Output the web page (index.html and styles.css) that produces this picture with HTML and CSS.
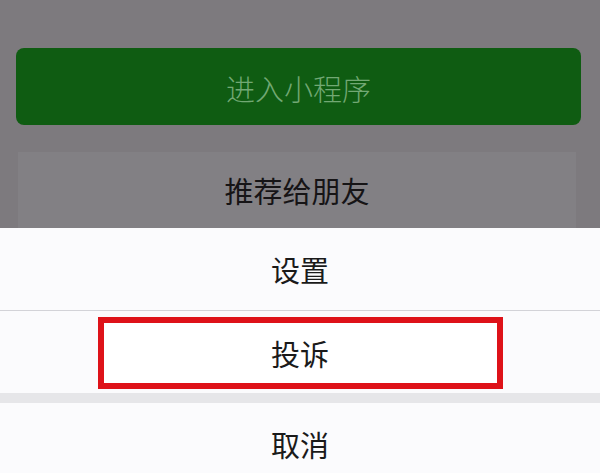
FILE: index.html
```html
<!DOCTYPE html>
<html lang="zh-CN">
<head>
  <meta charset="UTF-8">
  <meta name="viewport" content="width=device-width, initial-scale=1.0">
  <title>小程序菜单</title>
  <link rel="stylesheet" href="styles.css">
</head>
<body>
  <!-- Dimmed page behind the sheet -->
  <div class="page-dim">
    <div class="enter-button">进入小程序</div>
    <div class="share-button">推荐给朋友</div>
  </div>

  <!-- Action sheet -->
  <div class="action-sheet">
    <div class="sheet-item item-line">设置</div>
    <div class="sheet-item">
      <span class="mark-box">投诉</span>
    </div>
    <div class="sheet-gap"></div>
    <div class="sheet-item">取消</div>
  </div>
</body>
</html>
```

FILE: styles.css
```css
* {
  margin: 0;
  padding: 0;
  box-sizing: border-box;
}

body {
  font-family: "Noto Sans CJK SC", "Noto Sans", sans-serif;
  background: #7d7a7e;
  height: 473px;
  overflow: hidden;
}

.page-dim {
  padding: 48px 0 0 16px;
  height: 228px;
}

.enter-button {
  width: 565px;
  height: 77px;
  background: #0f5c12;
  border-radius: 8px;
  color: #72a874;
  font-size: 29px;
  font-weight: 300;
  display: flex;
  align-items: center;
  justify-content: center;
  padding-top: 2px;
}

.share-button {
  margin: 27px 0 0 2px;
  width: 558px;
  height: 76px;
  background: #828084;
  color: #161416;
  font-size: 29px;
  display: flex;
  align-items: center;
  justify-content: center;
}

.action-sheet {
  background: #fbfbfd;
}

.sheet-item {
  height: 82px;
  display: flex;
  align-items: center;
  justify-content: center;
  font-size: 29px;
  color: #1a1a1a;
}

.item-line {
  height: 83px;
  border-bottom: 1px solid #d3d3d8;
}

.mark-box {
  width: 405px;
  height: 72px;
  border: 6px solid #de1219;
  display: flex;
  align-items: center;
  justify-content: center;
  background: #ffffff;
  margin-top: 2px;
}

.sheet-gap {
  height: 10px;
  background: #e6e6e9;
}
```
